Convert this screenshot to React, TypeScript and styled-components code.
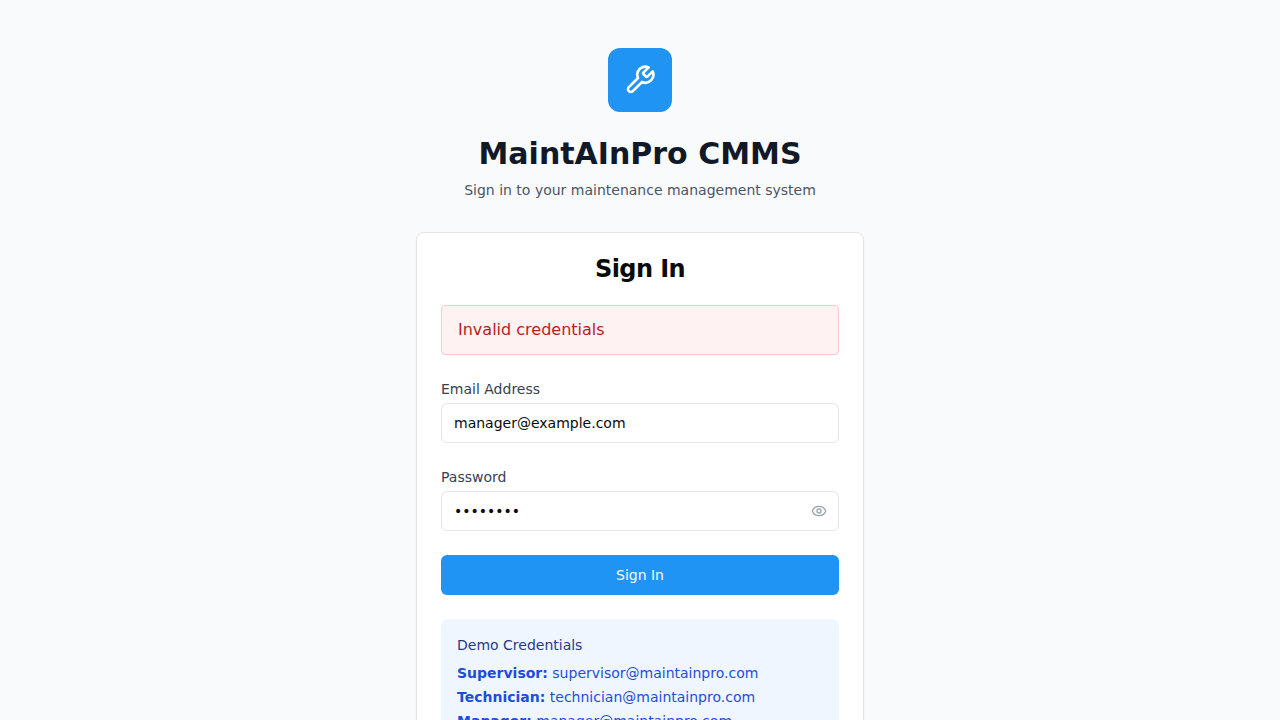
import React, { useState } from 'react';
import styled, { createGlobalStyle } from 'styled-components';
import { Eye, EyeOff } from 'lucide-react';

const GlobalStyle = createGlobalStyle`
  *, *::before, *::after { box-sizing: border-box; }
  html { scrollbar-width: none; }
  body {
    margin: 0;
    background: #f9fafb;
    color: #0a0a0a;
    font-family: "DejaVu Sans", sans-serif;
    font-size: 16px;
    line-height: 24px;
  }
  h1, h2, h3, p { margin: 0; }
  button, input { font: inherit; }
`;

const Page = styled.main`
  min-height: 100vh;
  display: flex;
  align-items: center;
  justify-content: center;
  padding: 48px 32px;
`;

const Column = styled.div`
  width: 100%;
  max-width: 448px;
  display: flex;
  flex-direction: column;
  gap: 32px;
`;

const Header = styled.header`
  display: flex;
  flex-direction: column;
  align-items: center;
  text-align: center;
`;

const Logo = styled.div`
  width: 64px;
  height: 64px;
  display: flex;
  align-items: center;
  justify-content: center;
  border-radius: 12px;
  background: #2094f3;
  color: #fff;
`;

const Title = styled.h1`
  margin-top: 24px;
  color: #111827;
  font-size: 30px;
  line-height: 36px;
  font-weight: 700;
`;

const Subtitle = styled.p`
  margin-top: 8px;
  color: #4b5563;
  font-size: 14px;
  line-height: 20px;
`;

const Card = styled.section`
  padding: 24px;
  border: 1px solid #e5e5e5;
  border-radius: 8px;
  background: #fff;
  box-shadow: 0 1px 2px rgba(0, 0, 0, 0.05);
`;

const CardTitle = styled.h2`
  margin-bottom: 24px;
  font-size: 24px;
  line-height: 24px;
  font-weight: 600;
  letter-spacing: -0.025em;
  text-align: center;
`;

const Form = styled.form`
  display: flex;
  flex-direction: column;
  gap: 24px;
`;

const Alert = styled.div`
  padding: 12px 16px;
  border: 1px solid #fecaca;
  border-radius: 4px;
  background: #fef2f2;
  color: #b91c1c;
`;

const Label = styled.label`
  display: block;
  color: #374151;
  font-size: 14px;
  line-height: 20px;
`;

const InputWrap = styled.div`
  position: relative;
  margin-top: 4px;
`;

const Input = styled.input<{ $withToggle?: boolean }>`
  display: block;
  width: 100%;
  height: 40px;
  padding: 8px ${p => (p.$withToggle ? 40 : 12)}px 8px 12px;
  border: 1px solid #e5e5e5;
  border-radius: 6px;
  background: #fff;
  color: #0a0a0a;
  font-size: 14px;
  line-height: 20px;
`;

const Toggle = styled.button`
  position: absolute;
  top: 0;
  right: 0;
  height: 100%;
  display: flex;
  align-items: center;
  padding: 0 12px;
  border: 0;
  background: transparent;
  color: #9ca3af;
  cursor: pointer;
`;

const Submit = styled.button`
  width: 100%;
  height: 40px;
  border: 0;
  border-radius: 6px;
  background: #2094f3;
  color: #f8fafc;
  font-size: 14px;
  line-height: 20px;
  cursor: pointer;
`;

const Demo = styled.aside`
  margin-top: 24px;
  padding: 16px;
  border-radius: 8px;
  background: #eff6ff;
  color: #1d4ed8;
  font-size: 14px;
  line-height: 20px;
`;

const DemoTitle = styled.h3`
  margin-bottom: 8px;
  color: #1e3a8a;
  font-size: 14px;
  line-height: 20px;
  font-weight: 500;
`;

const DemoList = styled.div`
  display: flex;
  flex-direction: column;
  gap: 4px;
`;

const accounts = [
  { role: 'Supervisor', email: 'supervisor@maintainpro.com' },
  { role: 'Technician', email: 'technician@maintainpro.com' },
  { role: 'Manager', email: 'manager@maintainpro.com' },
];

function WrenchIcon() {
  return (
    <svg
      width="32"
      height="32"
      viewBox="0 0 24 24"
      fill="none"
      stroke="currentColor"
      strokeWidth="2"
      strokeLinecap="round"
      strokeLinejoin="round"
      aria-hidden="true"
    >
      <path d="M14.7 6.3a1 1 0 0 0 0 1.4l1.6 1.6a1 1 0 0 0 1.4 0l3.77-3.77a6 6 0 0 1-7.94 7.94l-6.91 6.91a2.12 2.12 0 0 1-3-3l6.91-6.91a6 6 0 0 1 7.94-7.94l-3.76 3.76z" />
    </svg>
  );
}

export default function App() {
  const [email, setEmail] = useState('manager@example.com');
  const [password, setPassword] = useState('password');
  const [visible, setVisible] = useState(false);

  return (
    <>
      <GlobalStyle />
      <Page>
        <Column>
          <Header>
            <Logo><WrenchIcon /></Logo>
            <Title>MaintAInPro CMMS</Title>
            <Subtitle>Sign in to your maintenance management system</Subtitle>
          </Header>
          <Card>
            <CardTitle>Sign In</CardTitle>
            <Form onSubmit={e => e.preventDefault()}>
              <Alert role="alert">Invalid credentials</Alert>
              <div>
                <Label htmlFor="email">Email Address</Label>
                <InputWrap>
                  <Input id="email" type="email" value={email} onChange={e => setEmail(e.target.value)} />
                </InputWrap>
              </div>
              <div>
                <Label htmlFor="password">Password</Label>
                <InputWrap>
                  <Input
                    id="password"
                    type={visible ? 'text' : 'password'}
                    value={password}
                    onChange={e => setPassword(e.target.value)}
                    $withToggle
                  />
                  <Toggle
                    type="button"
                    aria-label={visible ? 'Hide password' : 'Show password'}
                    onClick={() => setVisible(v => !v)}
                  >
                    {visible ? <EyeOff size={16} /> : <Eye size={16} />}
                  </Toggle>
                </InputWrap>
              </div>
              <Submit type="submit">Sign In</Submit>
            </Form>
            <Demo>
              <DemoTitle>Demo Credentials</DemoTitle>
              <DemoList>
                {accounts.map(a => (
                  <p key={a.role}><strong>{a.role}:</strong> {a.email}</p>
                ))}
              </DemoList>
            </Demo>
          </Card>
        </Column>
      </Page>
    </>
  );
}
